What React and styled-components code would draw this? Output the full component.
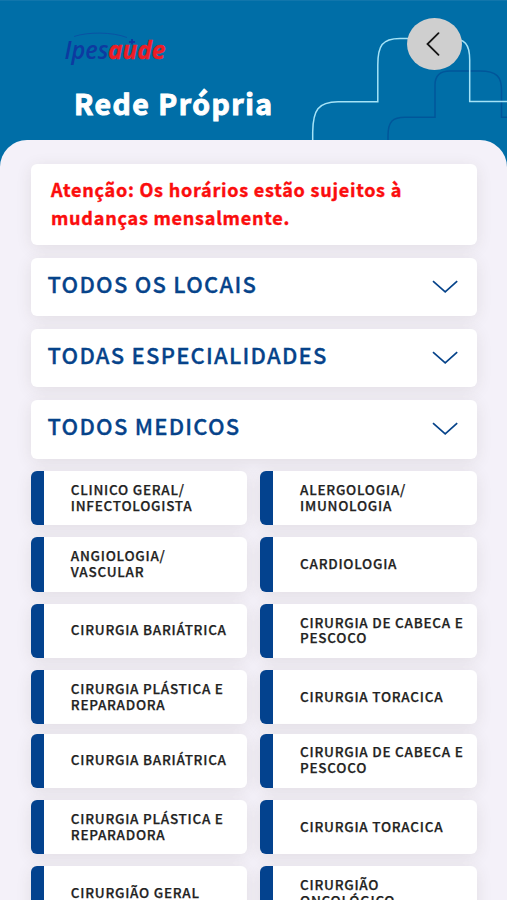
import React from "react";
import styled, { createGlobalStyle } from "styled-components";

const GlobalStyle = createGlobalStyle`
  * {
    box-sizing: border-box;
  }
  body {
    margin: 0;
    overflow: hidden;
    font-family: "Noto Sans CJK SC", "Noto Sans", sans-serif;
  }
`;

const Page = styled.div`
  position: relative;
  height: 900px;
  overflow: hidden;
  background: #006ea7;
  border-top: 1px solid #1176ac;
`;

const Header = styled.header`
  height: 139px;
  padding: 33px 0 0 62px;
`;

const Logo = styled.svg`
  display: block;
  width: 110px;
  height: 40px;
  overflow: visible;
`;

const Title = styled.h1`
  margin: 10.5px 0 0 12px;
  font-size: 28.4px;
  font-weight: 700;
  line-height: 36px;
  letter-spacing: 1.5px;
  color: #fff;
  -webkit-text-stroke: 1px currentColor;
`;

const Crosses = styled.svg`
  position: absolute;
  top: -1px;
  right: 0;
  width: 207px;
  height: 145px;
`;

const BackButton = styled.button`
  position: absolute;
  top: 17px;
  left: 407px;
  display: flex;
  align-items: center;
  justify-content: center;
  width: 55px;
  height: 52px;
  padding: 0 3px 0 0;
  border: 0;
  border-radius: 50%;
  background: #cfcfcf;
`;

const Panel = styled.main`
  position: relative;
  display: flex;
  flex-direction: column;
  gap: 12.3px;
  height: 800px;
  padding: 24.3px 30.5px 0 31px;
  border-radius: 27px 27px 0 0;
  background: #f4f1f9;
`;

const Card = styled.div`
  flex-shrink: 0;
  border-radius: 6px;
  background: #fff;
  box-shadow: 0 3px 16px rgba(70, 60, 40, 0.1);
`;

const Notice = styled(Card)`
  height: 81px;
  padding: 10.5px 20px;
  font-size: 18px;
  font-weight: 700;
  line-height: 28px;
  letter-spacing: 0.77px;
  color: #fb0d0d;
  -webkit-text-stroke: 0.4px currentColor;
`;

const Select = styled(Card)`
  display: flex;
  align-items: center;
  justify-content: space-between;
  height: 58.8px;
  padding: 0 19px 0 16.5px;
  font-size: 22px;
  font-weight: 500;
  letter-spacing: 1.25px;
  line-height: 30px;
  color: #06438a;
`;

const SelectLabel = styled.span`
  margin-top: -8px;
  -webkit-text-stroke: 0.3px currentColor;
`;

const Groups = styled.div`
  display: flex;
  flex-direction: column;
  gap: 9.2px;
`;

const Grid = styled.div`
  display: grid;
  grid-template-columns: 1fr 1fr;
  grid-auto-rows: 54.3px;
  gap: 12.1px 13px;
`;

const Specialty = styled(Card)`
  display: flex;
  align-items: center;
  padding-left: 26.8px;
  border-left: 13.5px solid #03428e;
  font-size: 13.5px;
  font-weight: 500;
  line-height: 15.7px;
  letter-spacing: 0.74px;
  white-space: pre-line;
  color: #222;
`;

const SpecialtyLabel = styled.span`
  margin-top: -1px;
  -webkit-text-stroke: 0.25px currentColor;
`;

const filters = ["TODOS OS LOCAIS", "TODAS ESPECIALIDADES", "TODOS MEDICOS"];

const groups = [
  [
    "CLINICO GERAL/\nINFECTOLOGISTA",
    "ALERGOLOGIA/\nIMUNOLOGIA",
    "ANGIOLOGIA/\nVASCULAR",
    "CARDIOLOGIA",
    "CIRURGIA BARIÁTRICA",
    "CIRURGIA DE CABECA E\nPESCOCO",
    "CIRURGIA PLÁSTICA E\nREPARADORA",
    "CIRURGIA TORACICA",
  ],
  [
    "CIRURGIA BARIÁTRICA",
    "CIRURGIA DE CABECA E\nPESCOCO",
    "CIRURGIA PLÁSTICA E\nREPARADORA",
    "CIRURGIA TORACICA",
    "CIRURGIÃO GERAL",
    "CIRURGIÃO\nONCOLÓGICO",
  ],
];

const ChevronDown = () => (
  <svg width="26" height="14" viewBox="0 0 26 14" fill="none">
    <path d="M1 1.2 13.2 11.8 25.2 1.2" stroke="#06438a" strokeWidth="1.7" />
  </svg>
);

const App = () => {
  return (
    <Page>
      <GlobalStyle />
      <Crosses viewBox="300 0 207 145" fill="none">
        <path
          d="M388 145V136C388 121 393 117.3 405 117.3H435V85C435 75 440 71 450 71H480C497 71 501.5 77 501.5 90V117.3H507"
          stroke="#00569a"
          strokeWidth="1.5"
        />
        <path
          d="M312.7 145V132C313 110 318 102 338 101.8H377.8V65C377.8 46 382 38.4 400 38.4H450C465 38.4 469.7 44 469.7 60V101.5H507"
          stroke="#a5e3f7"
          strokeWidth="1.5"
        />
      </Crosses>
      <Header>
        <Logo viewBox="62 34 110 40" role="img" aria-label="Ipesaúde">
          <path
            d="M74 36.5C88 31.8 112 31.800 127 37.5"
            fill="none"
            stroke="#0b4fa3"
            strokeWidth="0.9"
          />
          <g
            fontFamily="Open Sans, sans-serif"
            fontSize="25"
            fontStyle="italic"
          >
            <text
              x="64.5"
              y="59"
              fontWeight="600"
              fill="#0d3aa0"
              textLength="44"
              lengthAdjust="spacingAndGlyphs"
            >
              Ipes
            </text>
            <text
              x="108"
              y="59"
              fontWeight="700"
              fill="#ee1c25"
              stroke="#ee1c25"
              strokeWidth="0.4"
              textLength="57.5"
              lengthAdjust="spacingAndGlyphs"
            >
              aude
            </text>
          </g>
          <path
            d="M131 39h2v2h2v2h-2v1.500h-2v-1.500h-2v-2h2z"
            fill="#0d3aa0"
          />
        </Logo>
        <Title>Rede Própria</Title>
      </Header>
      <BackButton aria-label="Voltar">
        <svg width="14" height="24" viewBox="0 0 14 24" fill="none">
          <path
            d="M12.500 1.200 1.500 12 12.500 22.800"
            stroke="#151515"
            strokeWidth="1.800"
            strokeLinecap="round"
          />
        </svg>
      </BackButton>
      <Panel>
        <Notice>
          Atenção: Os horários estão sujeitos à
          <br />
          mudanças mensalmente.
        </Notice>
        {filters.map((label) => (
          <Select key={label}>
            <SelectLabel>{label}</SelectLabel>
            <ChevronDown />
          </Select>
        ))}
        <Groups>
          {groups.map((items, i) => (
            <Grid key={i}>
              {items.map((name) => (
                <Specialty key={name}>
                  <SpecialtyLabel>{name}</SpecialtyLabel>
                </Specialty>
              ))}
            </Grid>
          ))}
        </Groups>
      </Panel>
    </Page>
  );
};

export default App;
